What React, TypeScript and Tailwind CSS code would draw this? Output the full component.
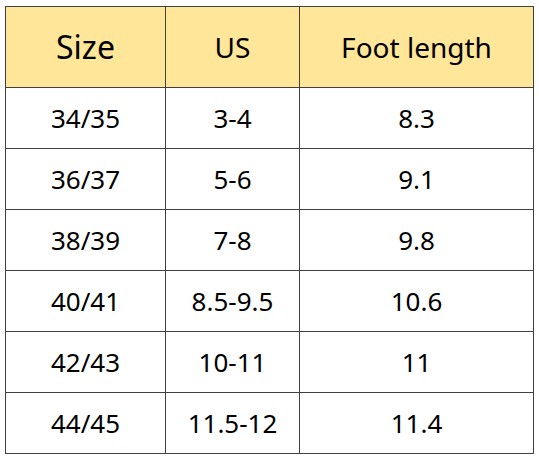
import React from "react";

const rows = [
  ["34/35", "3-4", "8.3"],
  ["36/37", "5-6", "9.1"],
  ["38/39", "7-8", "9.8"],
  ["40/41", "8.5-9.5", "10.6"],
  ["42/43", "10-11", "11"],
  ["44/45", "11.5-12", "11.4"],
];

export default function App() {
  return (
    <div className="w-[539px] h-[457px] bg-white pl-[5px] pt-[6px]" style={{ fontFamily: '"Noto Sans", "Open Sans", sans-serif' }}>
      <table className="border-collapse text-black border border-[#404040] table-fixed">
        <colgroup>
          <col className="w-[160px]" />
          <col className="w-[134px]" />
          <col className="w-[234px]" />
        </colgroup>
        <thead>
          <tr className="bg-[#ffe699] h-[81px]">
            <th className="border border-[#404040] font-normal text-[32px] leading-none">Size</th>
            <th className="border border-[#404040] font-normal text-[28px] leading-none">US</th>
            <th className="border border-[#404040] font-normal text-[28px] leading-none">Foot length</th>
          </tr>
        </thead>
        <tbody>
          {rows.map((r, i) => (
            <tr key={i} className="h-[61px]">
              {r.map((c, j) => (
                <td key={j} className="border border-[#404040] text-center text-[26px] leading-none">
                  {c}
                </td>
              ))}
            </tr>
          ))}
        </tbody>
      </table>
    </div>
  );
}
